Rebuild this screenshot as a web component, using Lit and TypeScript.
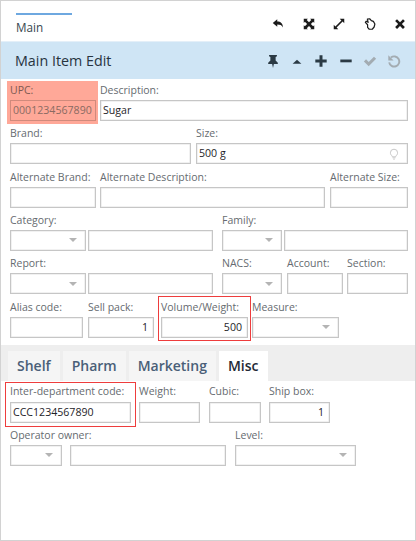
import { LitElement, css, html, svg } from "lit";

type Field = {
  label?: string;
  w: number;          // field width
  gap?: number;       // space before the field
  kind?: "select";
  value?: string;
  right?: boolean;
  cls?: string;
  bulb?: boolean;
};

const rowsTop: Field[][] = [
  [
    { label: "UPC:", w: 86, value: "0001234567890", cls: "upc" },
    { label: "Description:", w: 308, gap: 4, value: "Sugar" },
  ],
  [
    { label: "Brand:", w: 181 },
    { label: "Size:", w: 212, gap: 5, value: "500 g", bulb: true },
  ],
  [
    { label: "Alternate Brand:", w: 86 },
    { label: "Alternate Description:", w: 225, gap: 4 },
    { label: "Alternate Size:", w: 78, gap: 5 },
  ],
  [
    { label: "Category:", w: 76, kind: "select" },
    { w: 125, gap: 2 },
    { label: "Family:", w: 60, gap: 9, kind: "select" },
    { w: 124, gap: 2 },
  ],
  [
    { label: "Report:", w: 76, kind: "select" },
    { w: 125, gap: 2 },
    { label: "NACS:", w: 60, gap: 9, kind: "select" },
    { label: "Account:", w: 56, gap: 5 },
    { label: "Section:", w: 61, gap: 4 },
  ],
  [
    { label: "Alias code:", w: 73 },
    { label: "Sell pack:", w: 66, gap: 5, value: "1", right: true },
    { label: "Volume/Weight:", w: 87, gap: 7, value: "500", right: true, cls: "marked" },
    { label: "Measure:", w: 87, gap: 4, kind: "select" },
  ],
];

const rowsMisc: Field[][] = [
  [
    { label: "Inter-department code:", w: 121, value: "CCC1234567890", cls: "marked-code" },
    { label: "Weight:", w: 61, gap: 8 },
    { label: "Cubic:", w: 52, gap: 9 },
    { label: "Ship box:", w: 61, gap: 8, value: "1", right: true },
  ],
  [
    { label: "Operator owner:", w: 52, kind: "select" },
    { w: 156, gap: 8 },
    { label: "Level:", w: 121, gap: 9, kind: "select" },
  ],
];

const icon = (body: unknown, fill = "#1b1b1b") =>
  html`<svg viewBox="0 0 16 16" fill=${fill}>${body}</svg>`;

const icons = {
  reply: svg`<path d="M1 6.500 7 1.500v3c4.500 0 7.500 2.500 7.500 8-1.500-3-3.500-3.800-7.500-3.800v3.100z"/>`,
  shrink: svg`<path d="M1 1h5.500L5 2.500 8 5.500 11 2.500 9.500 1H15v5.500L13.500 5 10.500 8 13.500 11 15 9.500V15H9.500L11 13.500 8 10.500 5 13.500 6.500 15H1V9.500L2.500 11 5.500 8 2.500 5 1 6.500z"/>`,
  expand: svg`<path d="M9 1h6v6l-2.200-2.200L4.800 12.800 7 15H1V9l2.200 2.200 8-8z"/>`,
  hand: svg`<path fill="#fff" stroke="#1b1b1b" stroke-width="1.600" stroke-linejoin="round" d="M4.500 1.500 7.500 1 9.800 3.500 12.500 4.500 14.500 8 13.500 12 11 15 7 15 4.800 12.500 4.800 9 1.800 5.800 3 4.300 5.500 5.800z"/>`,
  close: svg`<path d="M1.500 4 4 1.500 8 5.500 12 1.500 14.500 4 10.500 8 14.500 12 12 14.500 8 10.500 4 14.500 1.500 12 5.500 8z"/>`,
  pin: svg`<path d="M3.500 1h9v1.600L11 3.500v4L13.500 10v1.500H9L8 16 7 11.500H2.500V10L5 7.500v-4L3.500 2.600z"/>`,
  up: svg`<path d="M3 11 8 6.500 13 11z"/>`,
  plus: svg`<path d="M6.300 1.500h3.400v4.800h4.800v3.400H9.700v4.800H6.300V9.700H1.500V6.300h4.800z"/>`,
  minus: svg`<path d="M1.500 6.300h13v3.200h-13z"/>`,
  check: svg`<path d="M1 8.500 3.500 6 6.500 9 12.500 3 15 5.500 6.500 14z"/>`,
  undo: svg`<path fill="none" stroke="#a3acb2" stroke-width="2.200" d="M4.500 4.100A5.800 5.800 0 1 1 2.500 9.500"/><path fill="#a3acb2" d="M1.500 1.500v6h6z"/>`,
  bulb: svg`<path fill="none" stroke="#c4c4c4" stroke-width="1.300" d="M5 10.200C3.600 8.800 3.200 7.600 3.200 6.400a4.800 4.800 0 0 1 9.600 0c0 1.200-.4 2.400-1.800 3.800-.5.600-.8 1-.8 1.600H5.800c0-.6-.3-1-.8-1.600z"/><path fill="#c4c4c4" d="M6 12.600h4v1.200H6zM6.800 14.400h2.400v1H6.800z"/>`,
};

class AppRoot extends LitElement {
  static styles = css`
    :host {
      display: block;
      font-family: "Open Sans", "Noto Sans", sans-serif;
      color: #1f2a36;
    }

    .window {
      box-sizing: border-box;
      height: 541px;
      border: 1px solid #d2d2d2;
      background: #fff;
      display: flex;
      flex-direction: column;
    }

    .top {
      height: 40px;
      display: flex;
      justify-content: space-between;
      padding: 12px 0 0 15px;
      box-sizing: border-box;
      flex: none;
    }
    .tab-main {
      width: 56px;
      height: 28px;
      border-top: 2px solid #6ea8e0;
      font-size: 11.700px;
      line-height: 25px;
      color: #37474f;
    }
    .win-tools {
      display: flex;
      gap: 18.500px;
      padding: 5px 9px 0 0;
    }
    .win-tools svg {
      width: 12px;
      height: 12px;
      display: block;
    }

    .head {
      height: 38px;
      background: #cfe5f5;
      display: flex;
      align-items: center;
      justify-content: space-between;
      padding: 0 14px 0 14px;
      flex: none;
      border-top: 1px solid #e4eff8;
      box-sizing: border-box;
    }
    .title {
      font-size: 14.300px;
      color: #27343f;
    }
    .head-tools {
      display: flex;
      gap: 10.200px;
    }
    .head-tools svg {
      width: 14px;
      height: 14px;
      display: block;
    }

    .form,
    .misc {
      padding-left: 9px;
    }
    .row {
      display: flex;
      height: 43.330px;
      align-items: flex-end;
    }
    .row:first-child {
      height: 42px;
    }
    .field {
      position: relative;
      flex: none;
    }
    .label {
      height: 21px;
      font-size: 10.500px;
      line-height: 22px;
      color: #666b70;
      white-space: nowrap;
    }
    .misc .row:first-child .label {
      height: 21px;
      line-height: 20px;
    }
    .input {
      box-sizing: border-box;
      height: 21px;
      border: 1px solid #c6c6c6;
      box-shadow: inset 0 0 0 0.5px #e4e4e4;
      background: #fff;
      font-size: 10.600px;
      line-height: 19px;
      padding: 0 2px;
      color: #1e2328;
      display: flex;
      justify-content: space-between;
      align-items: center;
      white-space: nowrap;
    }
    .input.right {
      justify-content: flex-end;
      padding-right: 5px;
    }
    .input svg {
      width: 12px;
      height: 12px;
      margin-right: 5px;
    }
    .input .caret {
      margin-left: auto;
      margin-right: 6px;
      border-left: 4.500px solid transparent;
      border-right: 4.500px solid transparent;
      border-top: 4.500px solid #b4b4b4;
    }

    /* reddish block behind the UPC field */
    .upc::before {
      content: "";
      position: absolute;
      inset: 2px -2px -3px -3px;
      background: #ffa898;
    }
    .upc > * {
      position: relative;
    }
    .upc .label {
      color: #7d5a52;
    }
    .upc .input {
      background: #ffa898;
      border-color: #d08a7c;
      box-shadow: none;
      color: #8a6a62;
    }

    /* red call-out frames, sit over the field */
    .marked::after,
    .marked-code::after {
      content: "";
      position: absolute;
      border: 1px solid #ee3d3d;
      pointer-events: none;
    }
    .marked::after {
      inset: 0 -3px -3px -3px;
    }
    .marked-code::after {
      inset: 1px -5px -4px -5px;
    }

    .tabs {
      height: 36px;
      margin-top: 7px;
      background: #eeeeee;
      display: flex;
      align-items: flex-end;
      gap: 3px;
      padding-left: 7px;
      flex: none;
    }
    .tab {
      height: 30px;
      box-sizing: border-box;
      background: #f5f5f5;
      padding: 0 9px;
      font-size: 14px;
      font-weight: 600;
      line-height: 30px;
      color: #4a5f78;
    }
    .tab.active {
      background: #fff;
      color: #1f2a36;
    }
  `;

  private renderField(f: Field) {
    const cls = `input ${f.right ? "right" : ""}`;
    return html`
      <div class="field ${f.cls ?? ""}" style="width:${f.w}px;margin-left:${f.gap ?? 0}px">
        ${f.label ? html`<div class="label">${f.label}</div>` : ""}
        <div class=${cls}>
          ${f.value ?? ""}
          ${f.kind === "select" ? html`<span class="caret"></span>` : ""}
          ${f.bulb ? icon(icons.bulb, "none") : ""}
        </div>
      </div>
    `;
  }

  private renderRows(rows: Field[][]) {
    return rows.map((r) => html`<div class="row">${r.map((f) => this.renderField(f))}</div>`);
  }

  render() {
    return html`
      <div class="window">
        <div class="top">
          <div class="tab-main">Main</div>
          <div class="win-tools">
            ${icon(icons.reply)} ${icon(icons.shrink)} ${icon(icons.expand)} ${icon(icons.hand)} ${icon(icons.close)}
          </div>
        </div>
        <div class="head">
          <div class="title">Main Item Edit</div>
          <div class="head-tools">
            ${icon(icons.pin, "#2b3a44")} ${icon(icons.up, "#2b3a44")} ${icon(icons.plus, "#2b3a44")}
            ${icon(icons.minus, "#2b3a44")} ${icon(icons.check, "#a3acb2")} ${icon(icons.undo, "none")}
          </div>
        </div>
        <div class="form">${this.renderRows(rowsTop)}</div>
        <div class="tabs">
          <div class="tab">Shelf</div>
          <div class="tab">Pharm</div>
          <div class="tab">Marketing</div>
          <div class="tab active">Misc</div>
        </div>
        <div class="misc">${this.renderRows(rowsMisc)}</div>
      </div>
    `;
  }
}

customElements.define("app-root", AppRoot);
